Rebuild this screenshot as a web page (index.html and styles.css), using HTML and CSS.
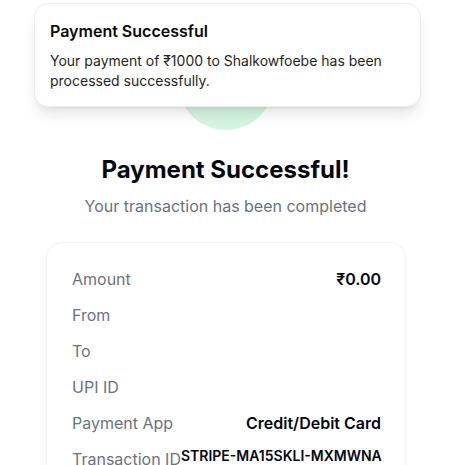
FILE: index.html
```html
<!DOCTYPE html>
<html>
<head>
<meta charset="utf-8">
<link rel="stylesheet" href="styles.css">
</head>
<body>
<main class="page">
  <div class="icon-circle"></div>
  <h1 class="title">Payment Successful!</h1>
  <p class="subtitle">Your transaction has been completed</p>
  <section class="card">
    <div class="row"><span class="label">Amount</span><span class="value">₹0.00</span></div>
    <div class="row"><span class="label">From</span><span class="value"></span></div>
    <div class="row"><span class="label">To</span><span class="value"></span></div>
    <div class="row"><span class="label">UPI ID</span><span class="value"></span></div>
    <div class="row"><span class="label">Payment App</span><span class="value">Credit/Debit Card</span></div>
    <div class="row row-top"><span class="label">Transaction ID</span><span class="value value-sm">STRIPE-MA15SKLI-MXMWNA</span></div>
  </section>
</main>
<div class="toast">
  <div class="toast-title">Payment Successful</div>
  <div class="toast-body">Your payment of ₹1000 to Shalkowfoebe has been processed successfully.</div>
</div>
</body>
</html>
```
FILE: styles.css
```css
* { box-sizing: border-box; }
html, body { margin: 0; padding: 0; background: #ffffff; }
body {
  font-family: Inter, "Noto Sans", sans-serif;
  color: #111827;
  width: 451px;
  height: 465px;
  overflow: hidden;
}
.page {
  display: flex;
  flex-direction: column;
  align-items: center;
  padding-top: 34px;
}
.icon-circle {
  width: 96px;
  height: 96px;
  border-radius: 50%;
  background: linear-gradient(180deg, #cbf0da 0%, #d6f6e2 100%);
}
.title {
  margin: 24px 0 0;
  font-size: 24px;
  line-height: 32px;
  font-weight: 700;
  color: #030712;
}
.subtitle {
  margin: 8px 0 0;
  font-size: 16px;
  line-height: 24px;
  color: #6b7280;
}
.card {
  margin-top: 24px;
  width: 360px;
  margin-left: 1px;
  border: 1px solid #f1f2f4;
  border-radius: 16px;
  box-shadow: 0 1px 3px rgba(0,0,0,0.05);
  padding: 24px 24px 24px 25px;
  display: flex;
  flex-direction: column;
  gap: 12px;
}
.row {
  display: flex;
  justify-content: space-between;
  align-items: center;
  font-size: 16px;
  line-height: 24px;
}
.row-top { align-items: flex-start; }
.label { color: #6b7280; white-space: nowrap; }
.value { font-weight: 600; color: #030712; white-space: nowrap; }
.value-sm { font-size: 14px; line-height: 20px; margin-top: -1px; }
.toast {
  position: absolute;
  top: 3px;
  left: 34px;
  width: 387px;
  background: #fff;
  border: 1px solid #ececee;
  border-radius: 14px;
  box-shadow: 0 10px 15px -3px rgba(0,0,0,0.1), 0 4px 6px -4px rgba(0,0,0,0.1);
  padding: 15px 16px 15px 15px;
}
.toast-title {
  font-size: 16px;
  line-height: 24px;
  font-weight: 600;
  color: #0a0a0a;
}
.toast-body {
  margin-top: 8px;
  font-size: 14px;
  line-height: 20px;
  color: #1f1f1f;
}
```
